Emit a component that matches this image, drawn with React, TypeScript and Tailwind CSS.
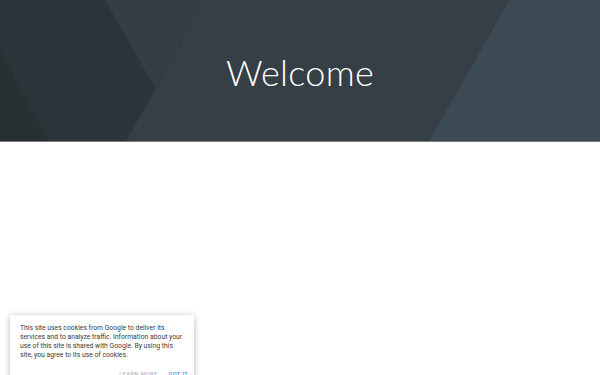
export default function App() {
  return (
    <div className="relative h-[375px] w-[600px] overflow-hidden bg-white">
      {/* Hero banner */}
      <header className="relative h-[142px] border-b border-[#737c80] bg-[#2c3439]">
        <svg
          className="absolute inset-0 h-[141px] w-[600px]"
          viewBox="0 0 600 141"
          preserveAspectRatio="none"
        >
          <polygon points="0,50 48,141 0,141" fill="#283034" />
          <polygon points="105,0 205,0 155,88" fill="#363e43" />
          <polygon points="205,0 509,0 429,141 126,141" fill="#353f45" />
          <polygon points="509,0 600,0 600,141 429,141" fill="#3b4a53" />
        </svg>
        <div className="relative flex h-full items-center justify-center pt-[2px]">
          <h1 className="font-['Lato','Noto_Sans',sans-serif] text-[36px] font-light leading-none tracking-[0.3px] text-white">
            Welcome
          </h1>
        </div>
      </header>

      {/* Cookie notice */}
      <div className="absolute left-[10px] top-[315px] w-[184px] rounded-[2px] bg-white px-[10px] pb-[6px] pt-[9px] shadow-[0_1px_6px_rgba(0,0,0,0.3)]">
        <p className="font-['Roboto','Liberation_Sans',sans-serif] text-[6.8px] leading-[9px] text-[#3a3a3a]">
          This site uses cookies from Google to deliver its services and to
          analyze traffic. Information about your use of this site is shared
          with Google. By using this site, you agree to its use of cookies.
        </p>
        <div className="-mr-[4px] mt-[10px] flex justify-end gap-[11px] font-['Roboto','Liberation_Sans',sans-serif] text-[5.6px] font-medium uppercase leading-[8px] tracking-[0.4px]">
          <span className="text-[#a8b8c8]">Learn more</span>
          <span className="text-[#4285f4]">Got it</span>
        </div>
      </div>
    </div>
  );
}
